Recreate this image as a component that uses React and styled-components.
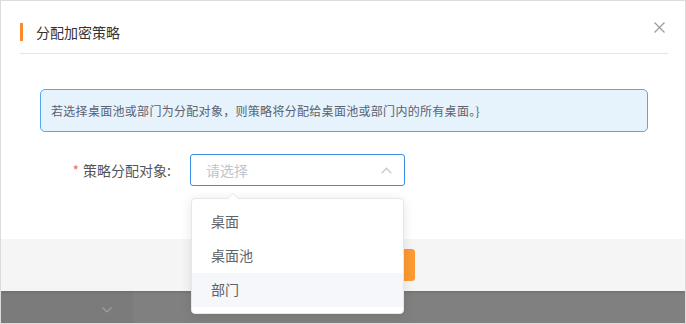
import styled, { createGlobalStyle } from "styled-components";

const GlobalStyle = createGlobalStyle`
  html, body {
    margin: 0;
    padding: 0;
    background: #fff;
  }
  body {
    font-family: "Noto Sans CJK SC", "Noto Sans", sans-serif;
  }
  * {
    box-sizing: border-box;
  }
`;

const options = ["桌面", "桌面池", "部门"];

export default function App() {
  return (
    <>
      <GlobalStyle />
      <Frame>
        <Dialog>
          <Header>
            <TitleWrap>
              <Accent />
              <Title>分配加密策略</Title>
            </TitleWrap>
            <CloseButton aria-label="close">
              <svg width="11" height="11" viewBox="0 0 11 11">
                <path d="M0.5 0.5 L10.5 10.5 M10.5 0.5 L0.5 10.5" stroke="#9a9a9a" strokeWidth="1.2" fill="none" />
              </svg>
            </CloseButton>
          </Header>
          <Body>
            <Alert>若选择桌面池或部门为分配对象，则策略将分配给桌面池或部门内的所有桌面。}</Alert>
            <FormRow>
              <Label>
                <Star>*</Star>策略分配对象:
              </Label>
              <SelectWrap>
                <Select>
                  <Placeholder>请选择</Placeholder>
                  <svg width="11" height="7" viewBox="0 0 11 7">
                    <path d="M0.7 6.3 L5.5 1.3 L10.3 6.3" stroke="#c6c9d0" strokeWidth="1.3" fill="none" />
                  </svg>
                </Select>
                <Dropdown>
                  <Arrow />
                  {options.map((o) => (
                    <Option key={o} $hover={o === "部门"}>
                      {o}
                    </Option>
                  ))}
                </Dropdown>
              </SelectWrap>
            </FormRow>
          </Body>
          <Footer>
            <Button>取消</Button>
            <Button $primary>确定</Button>
          </Footer>
        </Dialog>
        <Mask>
          <MaskLeft>
            <svg width="10" height="6" viewBox="0 0 10 6">
              <path d="M0.5 0.5 L5 5 L9.5 0.5" stroke="#a0a0a0" strokeWidth="1.1" fill="none" />
            </svg>
          </MaskLeft>
          <MaskRight />
        </Mask>
      </Frame>
    </>
  );
}

const Frame = styled.div`
  width: 686px;
  height: 324px;
  border: 1px solid #dcdcdc;
  display: flex;
  flex-direction: column;
  overflow: hidden;
`;

const Dialog = styled.div`
  background: #fff;
  display: flex;
  flex-direction: column;
  position: relative;
  z-index: 1;
  box-shadow: 0 1px 3px rgba(0, 0, 0, 0.15);
`;

const Header = styled.div`
  height: 53px;
  margin: 0 17px 0 19px;
  padding-top: 10px;
  border-bottom: 1px solid #e4e5ea;
  display: flex;
  align-items: center;
  justify-content: space-between;
`;

const TitleWrap = styled.div`
  display: flex;
  align-items: center;
`;

const Accent = styled.span`
  width: 3px;
  height: 18px;
  background: #fb8a2e;
  margin-right: 13px;
`;

const Title = styled.span`
  font-size: 14px;
  color: #333;
  line-height: 20px;
`;

const CloseButton = styled.button`
  border: none;
  background: none;
  padding: 0;
  margin: 0 3px 0 0;
  width: 11px;
  height: 11px;
  display: flex;
  position: relative;
  top: -5px;
`;

const Body = styled.div`
  height: 185px;
  padding: 35px 37px 0 39px;
`;

const Alert = styled.div`
  height: 43px;
  border: 1px solid #52a6f2;
  background: #e6f2fc;
  border-radius: 5px;
  padding: 0 10px;
  display: flex;
  align-items: center;
  font-size: 12px;
  color: #5b6270;
  letter-spacing: 0.3px;
`;

const FormRow = styled.div`
  display: flex;
  align-items: center;
  margin-top: 22px;
`;

const Label = styled.label`
  width: 150px;
  padding-right: 19px;
  text-align: right;
  font-size: 14px;
  color: #555;
`;

const Star = styled.span`
  color: #f56c6c;
  margin-right: 4px;
`;

const SelectWrap = styled.div`
  position: relative;
  width: 215px;
`;

const Select = styled.div`
  height: 32px;
  border: 1px solid #3a8ee6;
  border-radius: 3px;
  padding: 0 12px 0 15px;
  display: flex;
  align-items: center;
  justify-content: space-between;
`;

const Placeholder = styled.span`
  font-size: 14px;
  color: #c0c4cc;
`;

const Dropdown = styled.div`
  position: absolute;
  top: 44px;
  left: 1px;
  width: 213px;
  padding: 6px 0;
  background: #fff;
  border: 1px solid #e4e7ed;
  border-radius: 4px;
  box-shadow: 0 2px 12px rgba(0, 0, 0, 0.1);
  z-index: 5;
`;

const Arrow = styled.span`
  position: absolute;
  top: -6px;
  left: 35px;
  width: 0;
  height: 0;
  border-left: 6px solid transparent;
  border-right: 6px solid transparent;
  border-bottom: 6px solid #e4e7ed;

  &::after {
    content: "";
    position: absolute;
    top: 1px;
    left: -5px;
    border-left: 5px solid transparent;
    border-right: 5px solid transparent;
    border-bottom: 5px solid #fff;
  }
`;

const Option = styled.div`
  height: 34px;
  padding: 0 19px 2px;
  display: flex;
  align-items: center;
  font-size: 14px;
  line-height: 20px;
  color: #606266;
  background: ${(p) => (p.$hover ? "#f5f7fa" : "#fff")};
`;

const Footer = styled.div`
  height: 52px;
  background: #f5f5f5;
  display: flex;
  align-items: center;
  justify-content: center;
  gap: 8px;
`;

const Button = styled.button`
  width: 68px;
  height: 32px;
  border-radius: 3px;
  font-family: inherit;
  font-size: 14px;
  border: 1px solid ${(p) => (p.$primary ? "#fd9a32" : "#dcdfe6")};
  background: ${(p) => (p.$primary ? "#fd9a32" : "#fff")};
  color: ${(p) => (p.$primary ? "#fff" : "#606266")};
`;

const Mask = styled.div`
  flex: 1;
  display: flex;
`;

const MaskLeft = styled.div`
  width: 132px;
  background: #7b7b7b;
  display: flex;
  align-items: center;
  justify-content: flex-end;
  padding: 6px 21px 0 0;
`;

const MaskRight = styled.div`
  flex: 1;
  background: #808080;
`;
